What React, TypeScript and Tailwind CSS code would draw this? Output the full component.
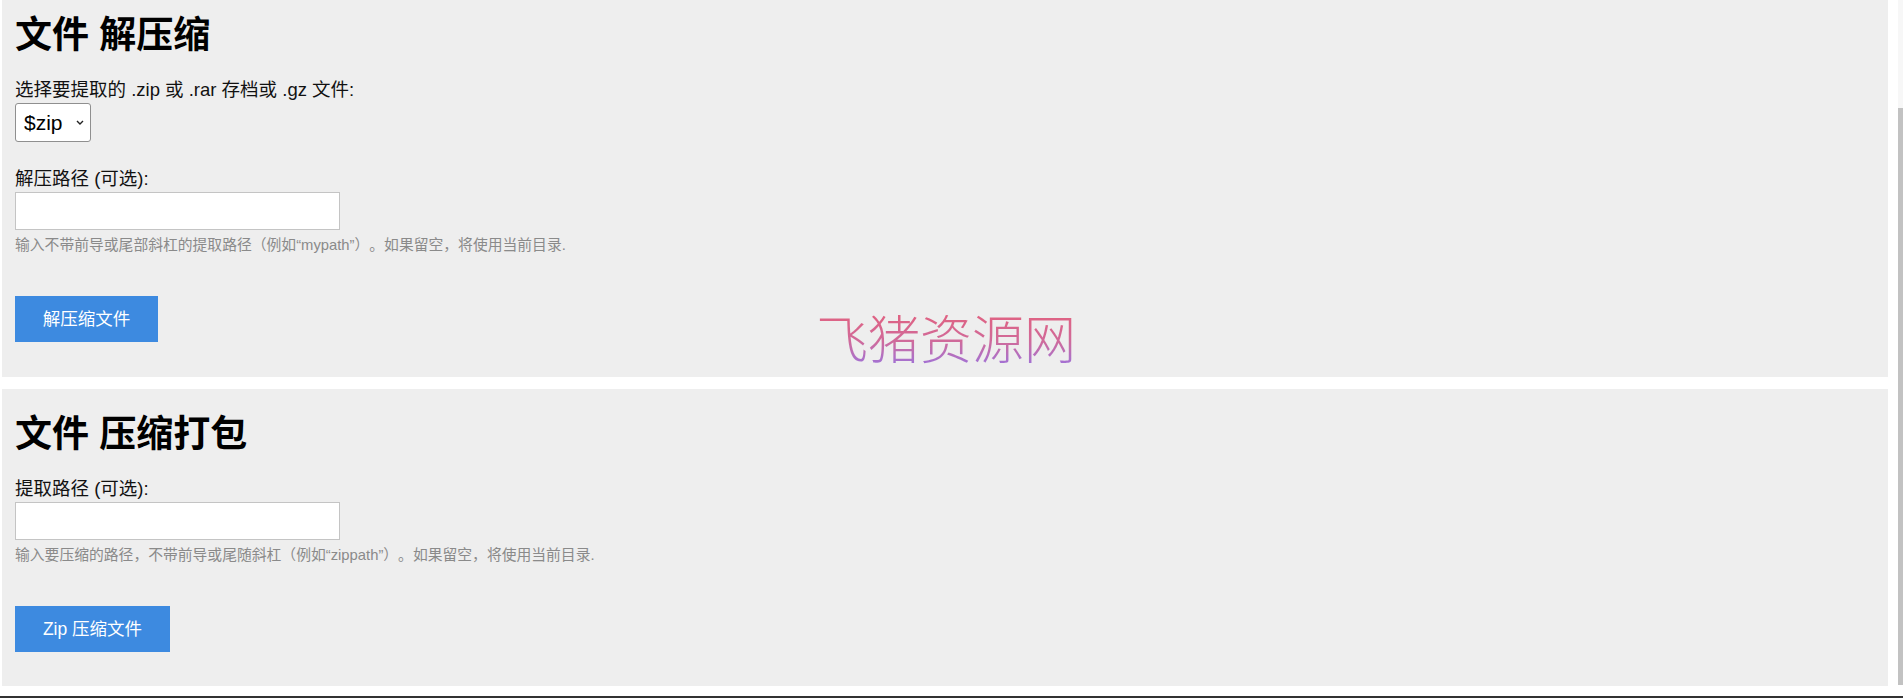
import { useState } from "react";

const FONT = "font-['Liberation_Sans','Noto_Sans_CJK_SC',sans-serif]";

function Field({ label, hint, value, onChange, top }: {
  label: string;
  hint: string;
  value: string;
  onChange: (v: string) => void;
  top: string;
}) {
  return (
    <>
      <label className={`${top} block text-[18.5px] leading-[22px] text-[#111]`}>{label}</label>
      <input
        type="text"
        value={value}
        onChange={(e) => onChange(e.target.value)}
        className="mt-[2px] block h-[38px] w-[325px] border border-[#c4c4c4] bg-white px-2 text-[16px] outline-none"
      />
      <p className="mt-[6px] text-[14.8px] leading-[18px] text-[#8a8a8a] [text-spacing-trim:space-all]">{hint}</p>
    </>
  );
}

export default function App() {
  const [archive, setArchive] = useState("$zip");
  const [extractPath, setExtractPath] = useState("");
  const [zipPath, setZipPath] = useState("");

  return (
    <div className={`relative flex h-[698px] w-full flex-col overflow-hidden bg-white ${FONT}`}>
      <div className="flex min-h-0 flex-1">
        {/* panels */}
        <div className="flex flex-1 flex-col pl-[2px] pr-[10px]">
          {/* Unzip */}
          <section className="bg-[#eeeeee] px-[13px] pb-[35px] pt-[16px]">
            <h1 className="text-[37px] font-bold leading-[40px] text-black">文件 解压缩</h1>
            <label className="mt-[23px] block text-[18.5px] leading-[22px] text-[#111]">
              选择要提取的 .zip 或 .rar 存档或 .gz 文件:
            </label>
            <div className="relative mt-[2px] inline-flex">
              <select
                value={archive}
                onChange={(e) => setArchive(e.target.value)}
                className="h-[39px] w-[76px] appearance-none rounded-[3px] border border-[#8f8f8f] bg-white pl-[8px] text-[21px] text-black outline-none"
              >
                <option value="$zip">$zip</option>
              </select>
              <svg
                viewBox="0 0 8 5"
                className="pointer-events-none absolute right-[7px] top-[17px] h-[5px] w-[8px]"
                fill="none"
                stroke="#222"
                strokeWidth="1.4"
              >
                <path d="M1 1l3 3 3-3" />
              </svg>
            </div>
            <Field
              top="mt-[26px]"
              label="解压路径 (可选):"
              hint="输入不带前导或尾部斜杠的提取路径（例如“mypath”）。如果留空，将使用当前目录."
              value={extractPath}
              onChange={setExtractPath}
            />
            <button className="mt-[42px] block h-[46px] w-[143px] bg-[#3d8ae0] text-[17.5px] text-white">
              解压缩文件
            </button>
          </section>

          {/* Zip */}
          <section className="mt-[12px] bg-[#eeeeee] px-[13px] pb-[34px] pt-[26px]">
            <h1 className="text-[37px] font-bold leading-[40px] text-black">文件 压缩打包</h1>
            <Field
              top="mt-[23px]"
              label="提取路径 (可选):"
              hint="输入要压缩的路径，不带前导或尾随斜杠（例如“zippath”）。如果留空，将使用当前目录."
              value={zipPath}
              onChange={setZipPath}
            />
            <button className="mt-[42px] block h-[46px] w-[155px] bg-[#3d8ae0] text-[17.5px] text-white">
              Zip 压缩文件
            </button>
          </section>
        </div>

        {/* scrollbar edge */}
        <div className="flex w-[5px] flex-col">
          <div className="h-[108px] bg-[#f7f7f7]" />
          <div className="flex-1 bg-[#c2c2c2]" />
        </div>
      </div>
      <div className="mt-[11px] h-[2px] bg-[#333333]" />

      {/* watermark */}
      <div className="pointer-events-none absolute left-[816px] top-[311px] bg-gradient-to-b from-[#e2607e] via-[#d06a9a] to-[#9470e6] bg-clip-text text-[52px] font-light leading-[60px] text-transparent">
        飞猪资源网
      </div>
    </div>
  );
}
